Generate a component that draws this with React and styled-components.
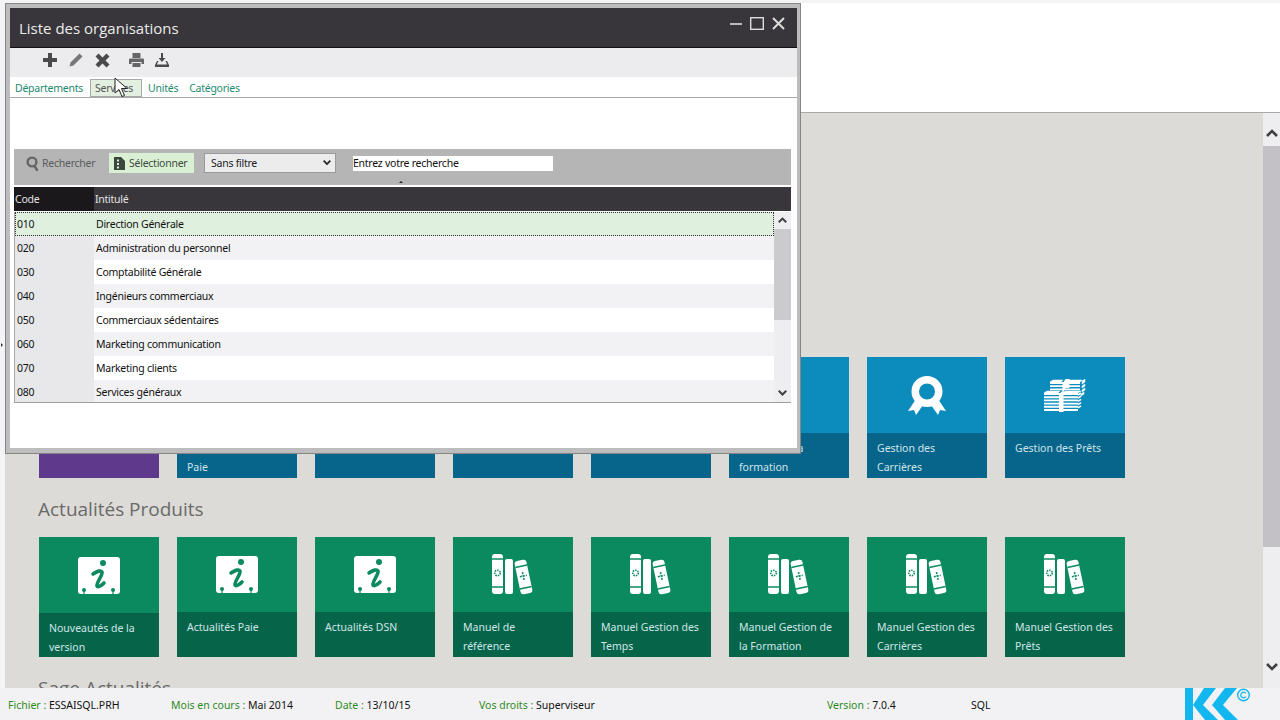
import React from 'react';
import styled, { createGlobalStyle } from 'styled-components';

const GlobalStyle = createGlobalStyle`
  html, body {
    margin: 0;
    padding: 0;
    overflow: hidden;
  }
  body {
    font-family: 'Noto Sans', 'Liberation Sans', sans-serif;
  }
`;

const Page = styled.div`
  position: relative;
  width: 1280px;
  height: 720px;
  overflow: hidden;
  display: flex;
  flex-direction: column;
  background: #f4f4f6;
`;

const Banner = styled.div`
  height: 109px;
  margin: 3px 0 0 5px;
  background: #ffffff;
  border-bottom: 1px solid #a9a8a4;
  flex-shrink: 0;
`;

const MainArea = styled.div`
  flex: 1;
  min-height: 0;
  display: flex;
  padding-left: 5px;
`;

const Content = styled.div`
  flex: 1;
  min-width: 0;
  overflow: hidden;
  background: #dcdbd8;
  padding: 244px 0 0 34px;
`;

const TileRow = styled.div`
  display: flex;
  gap: 18px;
`;

const SectionTitle = styled.h2`
  margin: 0 0 0 -1px;
  height: 59px;
  padding-top: 17px;
  box-sizing: border-box;
  font-family: 'Open Sans', sans-serif;
  font-weight: 400;
  font-size: 19px;
  line-height: 28px;
  color: #6a6a68;
`;

const Tile = styled.div`
  width: 120px;
  height: ${p => p.$height || 120}px;
  display: flex;
  flex-direction: column;
  background: ${p => p.$top};
`;

const TileIcon = styled.div`
  flex: 1;
  min-height: 0;
  display: flex;
  align-items: center;
  justify-content: center;
  color: #ffffff;
`;

const TileFooter = styled.div`
  height: ${p => p.$footer || 45}px;
  flex-shrink: 0;
  box-sizing: border-box;
  padding: 6px 6px 0 10px;
  background: ${p => p.$bottom};
  font-family: 'Noto Sans', sans-serif;
  font-size: 10.5px;
  line-height: 19px;
  white-space: pre-line;
  color: #cfe5ea;
`;

const ScrollBar = styled.div`
  width: 17px;
  flex-shrink: 0;
  display: flex;
  flex-direction: column;
  background: #eeeef0;
  color: #3f3f42;
`;

const ArrowCell = styled.div`
  height: ${p => p.$h}px;
  box-sizing: border-box;
  padding-top: ${p => p.$pt || 0}px;
  display: flex;
  align-items: center;
  justify-content: center;
  flex-shrink: 0;
  margin-top: ${p => p.$mt || 0}px;
`;

const ScrollThumb = styled.div`
  height: ${p => p.$h}px;
  flex-shrink: 0;
  background: ${p => p.$color || '#c3c1c6'};
`;

const StatusBar = styled.div`
  height: 32px;
  flex-shrink: 0;
  display: flex;
  align-items: center;
  padding: 1px 0 0 8px;
  box-sizing: border-box;
  background: #f2f2f4;
  font-family: 'Noto Sans', sans-serif;
  font-size: 10.5px;
  overflow: hidden;
`;

const StatusItem = styled.div`
  width: ${p => p.$w}px;
  flex-shrink: 0;
  white-space: nowrap;
  color: #111111;
`;

const StatusLabel = styled.span`
  color: #2f8a1c;
`;

const LogoBox = styled.div`
  align-self: flex-start;
  width: 70px;
  height: 32px;
  margin: -1px 0 0 4px;
  flex-shrink: 0;
`;

const Window = styled.section`
  position: absolute;
  left: 5px;
  top: 3px;
  width: 796px;
  height: 451px;
  box-sizing: border-box;
  display: flex;
  flex-direction: column;
  padding: 4px 3px 5px 4px;
  background: #bdbdbd;
  border: 1px solid #858585;
  font-size: 10.5px;
  letter-spacing: -0.25px;
`;

const TitleBar = styled.header`
  height: 39px;
  flex-shrink: 0;
  display: flex;
  align-items: center;
  justify-content: space-between;
  padding: 0 12px 0 9px;
  background: #38363a;
  border-bottom: 1px solid #111;
`;

const WindowTitle = styled.h1`
  margin: 0;
  font-family: 'Open Sans', sans-serif;
  font-weight: 400;
  font-size: 15px;
  letter-spacing: 0;
  color: #ececec;
`;

const WindowControls = styled.div`
  display: flex;
  align-items: center;
  gap: 8px;
  color: #dcdcdc;
  margin-top: -8px;
`;

const Toolbar = styled.div`
  height: 29px;
  flex-shrink: 0;
  box-sizing: border-box;
  display: flex;
  align-items: center;
  padding: 0 0 5px 32px;
  background: #ecebee;
`;

const ToolButton = styled.button`
  width: 16px;
  height: 16px;
  padding: 0;
  margin-right: ${p => p.$gap}px;
  border: 0;
  background: none;
  display: flex;
  align-items: center;
  justify-content: center;
  color: ${p => p.$color || '#4a4a4c'};
`;

const Tabs = styled.nav`
  height: 21px;
  flex-shrink: 0;
  box-sizing: border-box;
  display: flex;
  align-items: flex-end;
  padding-left: 5px;
  background: #ffffff;
  border-bottom: 1px solid #a8a8a8;
`;

const Tab = styled.div`
  height: ${p => (p.$active ? 18 : 19)}px;
  width: ${p => (p.$active ? '52px' : 'auto')};
  box-sizing: border-box;
  padding-left: ${p => (p.$active ? 4 : 0)}px;
  margin-right: ${p => p.$mr}px;
  display: flex;
  align-items: center;
  color: ${p => (p.$active ? '#555' : '#1d8a70')};
  background: ${p => (p.$active ? '#e3efe0' : 'transparent')};
  border: ${p => (p.$active ? '1px solid #a8a8a8' : '0')};
`;

const WindowBody = styled.div`
  flex: 1;
  min-height: 0;
  padding: 51px 6px 0 4px;
  background: #ffffff;
`;

const SearchBar = styled.div`
  height: 36px;
  box-sizing: border-box;
  display: flex;
  align-items: flex-start;
  padding: 4px 0 0 12px;
  background: #b5b5b5;
`;

const SearchButton = styled.div`
  height: 20px;
  width: ${p => p.$w}px;
  box-sizing: border-box;
  display: flex;
  align-items: center;
  gap: 3px;
  padding-left: ${p => p.$pad}px;
  margin-right: ${p => p.$mr}px;
  color: ${p => (p.$active ? '#3f4a3f' : '#5b5b5b')};
  background: ${p => (p.$active ? '#d9f0d5' : 'transparent')};
`;

const FilterSelect = styled.div`
  width: 132px;
  height: 20px;
  box-sizing: border-box;
  display: flex;
  align-items: center;
  justify-content: space-between;
  padding: 0 4px 0 6px;
  margin-right: 17px;
  color: #222;
  background: #ececec;
  border: 1px solid #9a9a9a;
`;

const SearchField = styled.div`
  width: 200px;
  height: 15px;
  margin-top: 3px;
  display: flex;
  align-items: center;
  padding-bottom: 1px;
  box-sizing: border-box;
  color: #111;
  background: #ffffff;
`;

const SortMark = styled.div`
  position: absolute;
  left: 399px;
  top: 181px;
  border-left: 2px solid transparent;
  border-right: 2px solid transparent;
  border-bottom: 2px solid #222;
`;

const TableHeader = styled.div`
  height: 24px;
  margin-top: 2px;
  display: flex;
  align-items: center;
  background: #38363a;
  color: #e2e2e2;
`;

const HeaderCell = styled.div`
  height: 100%;
  width: ${p => p.$w};
  flex: ${p => (p.$grow ? 1 : 'none')};
  display: flex;
  align-items: center;
  padding-left: 1px;
  box-sizing: border-box;
  background: ${p => (p.$dark ? '#1a181b' : 'transparent')};
`;

const TableFrame = styled.div`
  height: 191px;
  margin-top: 1px;
  box-sizing: border-box;
  display: flex;
  border-left: 1px solid #a8a8a8;
  border-bottom: 1px solid #a0a0a0;
`;

const Rows = styled.div`
  flex: 1;
  min-width: 0;
  overflow: hidden;
`;

const Row = styled.div`
  height: 24px;
  box-sizing: border-box;
  display: flex;
  align-items: center;
  color: #111;
  background: ${p => (p.$selected ? '#e0f0df' : p.$shaded ? '#f2f2f4' : '#ffffff')};
  outline: ${p => (p.$selected ? '1px dotted #333' : 'none')};
  outline-offset: -1px;
`;

const CodeCell = styled.div`
  width: 79px;
  height: 100%;
  flex-shrink: 0;
  display: flex;
  align-items: center;
  padding-left: 2px;
  box-sizing: border-box;
  background: ${p => (p.$selected ? 'transparent' : '#e8e8ea')};
`;

const LabelCell = styled.div`
  padding-left: 2px;
`;

const TableScroll = styled.div`
  width: 17px;
  flex-shrink: 0;
  display: flex;
  flex-direction: column;
  background: #eeeef0;
  color: #3f3f42;
`;

const TablePointer = styled.div`
  position: absolute;
  left: 114px;
  top: 77px;
  line-height: 0;
`;

const EdgeMark = styled.div`
  position: absolute;
  left: 1px;
  top: 343px;
  border-top: 2px solid transparent;
  border-bottom: 2px solid transparent;
  border-left: 2px solid #333;
`;

const Plus = () => (
  <svg width="14" height="14" viewBox="0 0 14 14" fill="currentColor">
    <path d="M5 0h4v5h5v4H9v5H5V9H0V5h5z" />
  </svg>
);

const Pencil = () => (
  <svg width="14" height="14" viewBox="0 0 14 14" fill="currentColor">
    <path d="M10.5 0.5l3 3-9 9L0.5 13.5l1-4z" />
  </svg>
);

const Cross = () => (
  <svg width="15" height="15" viewBox="0 0 15 15" fill="currentColor">
    <path d="M3.5 0.5L7.5 4.500 11.500 0.500 14.500 3.500 10.500 7.500 14.500 11.500 11.500 14.500 7.500 10.500 3.500 14.500 0.500 11.500 4.500 7.500 0.500 3.500z" />
  </svg>
);

const Printer = () => (
  <svg width="15" height="14" viewBox="0 0 15 14" fill="currentColor">
    <path d="M3.5 0h8v5h-8zM1 5.5h13a1 1 0 0 1 1 1V11h-2.500V9h-10v2H0V6.500a1 1 0 0 1 1-1zM3.500 10h8v4h-8z" />
  </svg>
);

const Export = () => (
  <svg width="14" height="14" viewBox="0 0 14 14" fill="currentColor">
    <path d="M6 0h2v5h2.500L7 9 3.500 5H6z" />
    <path d="M2 8h1.500L1.800 11.500h10.400L10.500 8H12l2 4v2H0v-2z" />
  </svg>
);

const Magnifier = () => (
  <svg width="13" height="15" viewBox="0 0 13 15" fill="none" stroke="#666" strokeWidth="2.400">
    <circle cx="6" cy="6" r="4.400" />
    <path d="M8.500 10l2.500 4" strokeLinecap="round" />
  </svg>
);

const SelectDoc = () => (
  <svg width="12" height="14" viewBox="0 0 12 14">
    <path d="M0 1h7l4 4v9H0z" fill="#3c463c" />
    <path d="M3 3.500h2v2H3zM3 7h2v2H3zM3 10.500h2v2H3z" fill="#d9f0d5" />
  </svg>
);

const Chevron = ({ up, size = 9 }) => (
  <svg width={size} height={size * 0.67} viewBox="0 0 12 8" fill="none" stroke="currentColor" strokeWidth="2.600">
    <path d={up ? 'M1 7l5-5 5 5' : 'M1 1l5 5 5-5'} />
  </svg>
);

const MinimizeIcon = () => (
  <svg width="12" height="2" viewBox="0 0 12 2">
    <rect width="12" height="2" fill="currentColor" opacity="0.8" />
  </svg>
);

const MaximizeIcon = () => (
  <svg width="14" height="13" viewBox="0 0 14 13" fill="none" stroke="currentColor" strokeWidth="1.400">
    <rect x="0.700" y="0.700" width="12.600" height="11.600" />
  </svg>
);

const CloseIcon = () => (
  <svg width="13" height="13" viewBox="0 0 13 13" fill="none" stroke="currentColor" strokeWidth="2">
    <path d="M1 1l11 11M12 1L1 12" />
  </svg>
);

const InfoIcon = () => (
  <svg width="42" height="37" viewBox="0 0 42 37">
    <rect width="42" height="37" rx="3" fill="#fff" />
    <circle cx="25" cy="6" r="3" fill="#0b8a60" />
    <path d="M15 17c4-3 8-4 9-2 1 3-6 11-5 14 1 2 5-1 7-3" fill="none" stroke="#0b8a60" strokeWidth="3.600" strokeLinecap="round" />
    <circle cx="6" cy="33" r="2" fill="#0b8a60" />
    <rect x="5.400" y="33" width="1.200" height="4" fill="#0b8a60" />
    <circle cx="35" cy="33" r="2" fill="#0b8a60" />
    <rect x="34.400" y="33" width="1.200" height="4" fill="#0b8a60" />
  </svg>
);

const BooksIcon = () => (
  <svg width="42" height="42" viewBox="0 0 42 42">
    <rect x="0" y="0" width="11" height="40" rx="3" fill="#fff" />
    <path d="M0 5h11M0 33h11" stroke="#0b8a60" strokeWidth="1.400" />
    <circle cx="5.500" cy="19" r="2.800" fill="none" stroke="#0b8a60" strokeWidth="1.600" strokeDasharray="1.500 1" />
    <rect x="13" y="5" width="8" height="35" rx="2" fill="#fff" />
    <g transform="rotate(-12 31.500 23)">
      <rect x="25.500" y="6" width="12" height="34" rx="3" fill="#fff" />
      <path d="M25.500 12h12M25.500 34h12" stroke="#0b8a60" strokeWidth="1.400" />
      <path d="M31.500 18v8M28 22h7" stroke="#0b8a60" strokeWidth="1.600" strokeDasharray="2 1" />
    </g>
  </svg>
);

const AwardIcon = () => (
  <svg width="38" height="39" viewBox="0 0 38 39" fill="#fff">
    <path d="M8 23L0 35l6-1 2 5 7-10zM30 23l8 12-6-1-2 5-7-10z" />
    <circle cx="19" cy="15.500" r="11.750" fill="none" stroke="#fff" strokeWidth="7.500" />
  </svg>
);

const stripes = (x, y, w, n) =>
  Array.from({ length: n }, (_, i) => `M${x} ${y + i * 3.200}h${w}`).join('');

const MoneyIcon = () => (
  <svg width="42" height="33" viewBox="0 0 42 33" fill="none" stroke="#fff">
    <path d={stripes(6, 4, 30, 3)} strokeWidth="1.800" />
    <path d="M9 1l-3 2h11l2-2zM24 1l-2 2h14l2-2z" fill="#fff" strokeWidth="0.500" />
    <path d="M38 2v3l3-2V0zM38 7v2l3-2V5zM38 11v2l3-2V9zM37 15v2l3-2v-2z" fill="#fff" strokeWidth="0.500" />
    <path d={stripes(0, 15, 34, 6)} strokeWidth="1.900" />
    <path d="M3 12l-3 2h14l2-2zM21 12l-2 2h15l3-2z" fill="#fff" strokeWidth="0.500" />
    <path d="M34 16l3-2M34 19.200l3-2M34 22.400l3-2M34 25.600l3-2M34 28.800l3-2" strokeWidth="1.600" />
    <path d="M15 15v18h4.500V13l2-4h4V0h-4l-3 5v7z" fill="#fff" strokeWidth="0" />
  </svg>
);

const DocIcon = () => <svg width="22" height="34" viewBox="0 0 22 34"><rect width="22" height="34" rx="3" fill="#fff" /></svg>;

const KLogo = () => (
  <svg width="70" height="32" viewBox="0 0 70 32" fill="#12b7ef">
    <path d="M0 0h8v32H0z" />
    <path d="M19 0h12L18 17l15 15H20L8 17z" />
    <path d="M40 0h12L38 17l15 15H40L27 17z" />
    <circle cx="58.500" cy="7" r="5.800" fill="none" stroke="#12b7ef" strokeWidth="1.400" />
    <path d="M60.800 5.300a2.800 2.800 0 1 0 0 3.400" fill="none" stroke="#12b7ef" strokeWidth="1.200" />
  </svg>
);

const Cursor = () => (
  <svg width="15" height="21" viewBox="0 0 15 21">
    <path d="M1 1v15l4-3.500 3 7 2.500-1-3-7H13z" fill="#fff" stroke="#222" strokeWidth="1" />
  </svg>
);

const blue = { top: '#0c8bbd', bottom: '#07648a' };
const green = { top: '#0b8a60', bottom: '#066548' };

const firstRow = [
  { top: '#5f3a8c', bottom: '#5f3a8c', label: '' },
  { ...blue, label: 'Gestion de la\nPaie' },
  { ...blue, label: '' },
  { ...blue, label: '' },
  { ...blue, label: '' },
  { ...blue, label: 'Gestion de la formation', icon: <DocIcon /> },
  { ...blue, label: 'Gestion des Carrières', icon: <AwardIcon /> },
  { ...blue, label: 'Gestion des Prêts', icon: <MoneyIcon /> },
];

const secondRow = [
  { label: 'Nouveautés de la version', icon: <InfoIcon />, footer: 44 },
  { label: 'Actualités Paie', icon: <InfoIcon /> },
  { label: 'Actualités DSN', icon: <InfoIcon /> },
  { label: 'Manuel de\nréférence', icon: <BooksIcon /> },
  { label: 'Manuel Gestion des Temps', icon: <BooksIcon /> },
  { label: 'Manuel Gestion de la Formation', icon: <BooksIcon /> },
  { label: 'Manuel Gestion des Carrières', icon: <BooksIcon /> },
  { label: 'Manuel Gestion des Prêts', icon: <BooksIcon /> },
];

const services = [
  ['010', 'Direction Générale'],
  ['020', 'Administration du personnel'],
  ['030', 'Comptabilité Générale'],
  ['040', 'Ingénieurs commerciaux'],
  ['050', 'Commerciaux sédentaires'],
  ['060', 'Marketing communication'],
  ['070', 'Marketing clients'],
  ['080', 'Services généraux'],
];

export default function App() {
  return (
    <Page>
      <GlobalStyle />
      <Banner />
      <MainArea>
        <Content>
          <TileRow>
            {firstRow.map((t, i) => (
              <Tile key={i} $top={t.top} $height={121}>
                <TileIcon>{t.icon}</TileIcon>
                <TileFooter $bottom={t.bottom}>{t.label}</TileFooter>
              </Tile>
            ))}
          </TileRow>
          <SectionTitle>Actualités Produits</SectionTitle>
          <TileRow>
            {secondRow.map(t => (
              <Tile key={t.label} $top={green.top}>
                <TileIcon>{t.icon}</TileIcon>
                <TileFooter $bottom={green.bottom} $footer={t.footer}>{t.label}</TileFooter>
              </Tile>
            ))}
          </TileRow>
          <SectionTitle>Sage Actualités</SectionTitle>
        </Content>
        <ScrollBar>
          <ArrowCell $h={33} $pt={7}><Chevron up size={12} /></ArrowCell>
          <ScrollThumb $h={401} />
          <ArrowCell $h={18} $mt={111}><Chevron size={12} /></ArrowCell>
        </ScrollBar>
      </MainArea>
      <StatusBar>
        <StatusItem $w={163}><StatusLabel>Fichier :</StatusLabel> ESSAISQL.PRH</StatusItem>
        <StatusItem $w={164}><StatusLabel>Mois en cours :</StatusLabel> Mai 2014</StatusItem>
        <StatusItem $w={144}><StatusLabel>Date :</StatusLabel> 13/10/15</StatusItem>
        <StatusItem $w={348}><StatusLabel>Vos droits :</StatusLabel> Superviseur</StatusItem>
        <StatusItem $w={144}><StatusLabel>Version :</StatusLabel> 7.0.4</StatusItem>
        <StatusItem $w={210}>SQL</StatusItem>
        <LogoBox><KLogo /></LogoBox>
      </StatusBar>

      <Window>
        <TitleBar>
          <WindowTitle>Liste des organisations</WindowTitle>
          <WindowControls>
            <MinimizeIcon />
            <MaximizeIcon />
            <CloseIcon />
          </WindowControls>
        </TitleBar>
        <Toolbar>
          <ToolButton $gap={10}><Plus /></ToolButton>
          <ToolButton $gap={10} $color="#77777a"><Pencil /></ToolButton>
          <ToolButton $gap={18}><Cross /></ToolButton>
          <ToolButton $gap={10} $color="#666669"><Printer /></ToolButton>
          <ToolButton $gap={0}><Export /></ToolButton>
        </Toolbar>
        <Tabs>
          <Tab $mr={7}>Départements</Tab>
          <Tab $active $mr={6}>Services</Tab>
          <Tab $mr={11}>Unités</Tab>
          <Tab $mr={0}>Catégories</Tab>
        </Tabs>
        <WindowBody>
          <SearchBar>
            <SearchButton $w={83} $pad={0} $mr={0}><Magnifier />Rechercher</SearchButton>
            <SearchButton $active $w={85} $pad={5} $mr={10}><SelectDoc />Sélectionner</SearchButton>
            <FilterSelect>Sans filtre<Chevron size={8} /></FilterSelect>
            <SearchField>Entrez votre recherche</SearchField>
          </SearchBar>
          <TableHeader>
            <HeaderCell $dark $w="80px">Code</HeaderCell>
            <HeaderCell $grow>Intitulé</HeaderCell>
          </TableHeader>
          <TableFrame>
            <Rows>
              {services.map(([code, label], i) => (
                <Row key={code} $selected={i === 0} $shaded={i % 2 === 1}>
                  <CodeCell $selected={i === 0}>{code}</CodeCell>
                  <LabelCell>{label}</LabelCell>
                </Row>
              ))}
            </Rows>
            <TableScroll>
              <ArrowCell $h={17}><Chevron up size={9} /></ArrowCell>
              <ScrollThumb $h={91} $color="#cbcacd" />
              <ArrowCell $h={18} $mt={64}><Chevron size={9} /></ArrowCell>
            </TableScroll>
          </TableFrame>
        </WindowBody>
      </Window>
      <SortMark />
      <TablePointer><Cursor /></TablePointer>
      <EdgeMark />
    </Page>
  );
}
